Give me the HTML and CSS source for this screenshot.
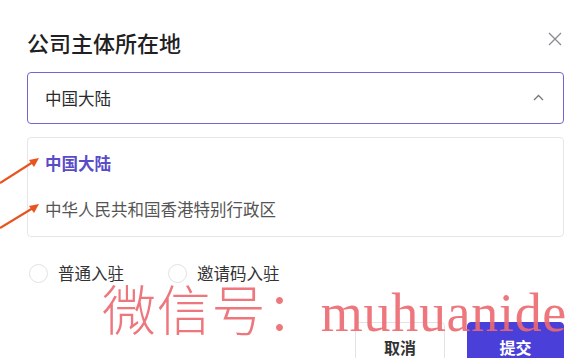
FILE: index.html
```html
<!DOCTYPE html>
<html lang="zh-CN">
<head>
<meta charset="UTF-8">
<title>公司主体所在地</title>
<link rel="stylesheet" href="styles.css">
</head>
<body>
<div class="dialog">
  <div class="dialog-head">
    <div class="dialog-title">公司主体所在地</div>
    <svg class="close" width="14" height="14" viewBox="0 0 14 14"><path d="M1 1 L13 13 M13 1 L1 13" stroke="#8a8a90" stroke-width="1.3" fill="none"/></svg>
  </div>
  <div class="select">
    <span>中国大陆</span>
    <svg class="chevron" width="11" height="7" viewBox="0 0 11 7"><path d="M1 6 L5.5 1.5 L10 6" stroke="#777" stroke-width="1.3" fill="none"/></svg>
  </div>
  <div class="options">
    <div class="option active">中国大陆</div>
    <div class="option">中华人民共和国香港特别行政区</div>
  </div>
  <div class="radios">
    <label class="radio"><span class="dot"></span>普通入驻</label>
    <label class="radio"><span class="dot"></span>邀请码入驻</label>
  </div>
  <div class="footer">
    <button class="btn">取消</button>
    <button class="btn primary">提交</button>
  </div>
</div>
<svg class="arrows" width="50" height="240" viewBox="0 0 50 240">
  <path d="M0 183 L33 162" stroke="#e8541e" stroke-width="2.2" fill="none"/>
  <path d="M39 158 L29 160 L34 167 Z" fill="#e8541e"/>
  <path d="M0 228 L33 208" stroke="#e8541e" stroke-width="2.2" fill="none"/>
  <path d="M39 204 L29 206 L34 213 Z" fill="#e8541e"/>
</svg>
<div class="watermark">微信号：muhuanide</div>
</body>
</html>
```
FILE: styles.css
```css
html, body {
    margin: 0;
    height: 100%;
    overflow: hidden;
}
body {
    background: #fff;
    font-family: "Noto Sans CJK SC", "Noto Sans", sans-serif;
    color: #333;
}
.dialog {
    padding: 27px 14px 0 27px;
}
.dialog-head {
    display: flex;
    justify-content: space-between;
    align-items: center;
    height: 30px;
}
.dialog-title {
    font-size: 22px;
    font-weight: 500;
    color: #1f1f24;
}
.close {
    margin-right: 2px;
    margin-top: -6px;
}
.select {
    margin-top: 15px;
    height: 50px;
    border: 1px solid #7466d2;
    border-radius: 4px;
    display: flex;
    align-items: center;
    justify-content: space-between;
    padding: 0 19px 0 17px;
    font-size: 16.5px;
    color: #2a2a2e;
}
.chevron {
    margin-top: -2px;
}
.options {
    margin-top: 13px;
    border: 1px solid #e6e6ea;
    border-radius: 4px;
    padding: 2px 0 4px;
}
.option {
    height: 46px;
    line-height: 46px;
    padding-left: 17px;
    font-size: 16.5px;
    color: #555;
}
.option.active {
    color: #5a4cc8;
    font-weight: 700;
}
.radios {
    display: flex;
    gap: 44px;
    margin-top: 24px;
    padding-left: 2px;
}
.radio {
    display: flex;
    align-items: center;
    gap: 10px;
    font-size: 16.5px;
    color: #333;
}
.dot {
    width: 17px;
    height: 17px;
    border: 1px solid #e2e2e6;
    border-radius: 50%;
}
.footer {
    display: flex;
    justify-content: flex-end;
    gap: 22px;
    margin-top: 37px;
}
.btn {
    width: 90px;
    height: 50px;
    border: 1px solid #e3e3e7;
    border-radius: 4px;
    background: #fff;
    font-family: inherit;
    font-size: 16px;
    font-weight: 700;
    color: #333;
    padding: 0;
}
.btn.primary {
    width: 97px;
    background: #4b3fd9;
    border-color: #4b3fd9;
    color: #fff;
}
.arrows {
    position: absolute;
    left: 0;
    top: 0;
}
.watermark {
    position: absolute;
    left: 102px;
    top: 268px;
    font-family: "Liberation Serif", "Noto Sans CJK SC", serif;
    font-size: 54px;
    font-weight: 300;
    letter-spacing: 0.7px;
    color: rgba(236, 104, 112, 0.9);
    white-space: nowrap;
    pointer-events: none;
}
```
